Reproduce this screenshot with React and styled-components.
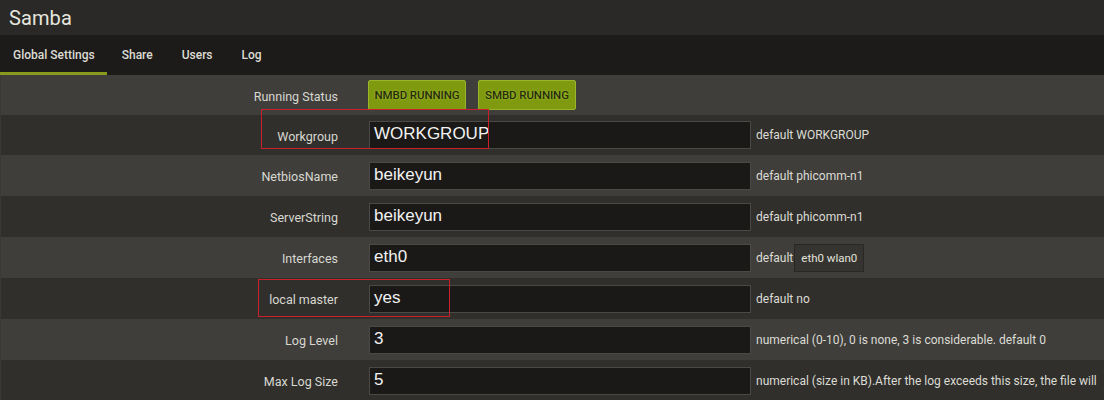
import React from "react";
import styled, { createGlobalStyle } from "styled-components";

const Global = createGlobalStyle`
  html, body { margin: 0; padding: 0; background: #31302d; }
  body { font-family: Roboto, "Noto Sans", sans-serif; overflow: hidden; }
`;

const Page = styled.div`
  width: 1104px;
  height: 400px;
  overflow: hidden;
  background: #31302d;
`;

const Header = styled.div`
  height: 35px;
  background: #2a2927;
  display: flex;
  align-items: center;
  padding-left: 9px;
  color: #e6e6de;
  font-size: 20px;
  letter-spacing: 0.1px;
`;

const Tabs = styled.div`
  height: 40px;
  background: #1c1b19;
  display: flex;
  align-items: stretch;
`;

const Tab = styled.div`
  display: flex;
  align-items: center;
  padding: 2px ${(p) => (p.$first ? "12px" : "14px")} 0 ${(p) => (p.$first ? "13px" : "15px")};
  font-size: 12px;
  font-weight: 500;
  color: #dcdcd4;
  border-bottom: 3px solid ${(p) => (p.$active ? "#8a9a1c" : "transparent")};
`;

const Rows = styled.div`
  display: flex;
  flex-direction: column;
  border-left: 1px solid #3a3936;
`;

const Row = styled.div`
  position: relative;
  height: ${(p) => p.$h || 41}px;
  background: ${(p) => (p.$light ? "#3f3e3b" : "#302f2c")};
  display: grid;
  grid-template-columns: 337px 382px auto;
  column-gap: 31px;
  align-items: center;
  white-space: nowrap;
`;

const Label = styled.div`
  text-align: right;
  font-size: 12.5px;
  color: #d8d8d0;
  padding-top: 2px;
`;

const FieldWrap = styled.div`
  display: flex;
  align-items: center;
  gap: 5px;
  grid-column: 2 / 4;
`;

const Input = styled.div`
  width: 382px;
  height: 28px;
  box-sizing: border-box;
  background: #1a1917;
  border: 1px solid #4a4946;
  display: flex;
  align-items: center;
  padding: 0 0 2px 4px;
  font-family: "Liberation Sans", Arial, sans-serif;
  font-size: 17px;
  color: #f2f2f2;
  flex-shrink: 0;
`;

const Desc = styled.div`
  font-size: 12px;
  color: #dcdcd4;
  display: flex;
  align-items: center;
  gap: 1px;
`;

const Chip = styled.span`
  display: inline-flex;
  align-items: center;
  height: 28px;
  padding: 0 6px;
  box-sizing: border-box;
  background: #353431;
  border: 1px solid #292826;
  color: #e2e2da;
  font-size: 11.5px;
`;

const Buttons = styled.div`
  display: flex;
  gap: 12px;
  grid-column: 2 / 4;
  margin-left: -1px;
`;

const StatusButton = styled.div`
  height: 30px;
  width: 98px;
  box-sizing: border-box;
  background: #7f9a0f;
  border: 1px solid #9ab52a;
  border-radius: 2px;
  display: flex;
  align-items: center;
  justify-content: center;
  font-size: 11.5px;
  font-weight: 500;
  color: #262b0c;
  letter-spacing: -0.1px;
  text-shadow: 0 0 2px rgba(200, 230, 90, 0.6);
`;

const Highlight = styled.div`
  position: absolute;
  left: ${(p) => p.$x}px;
  top: ${(p) => p.$y}px;
  width: ${(p) => p.$w}px;
  height: ${(p) => p.$hh}px;
  border: 1px solid #c8212b;
  box-sizing: border-box;
  pointer-events: none;
`;

const fields = [
  { label: "Workgroup", value: "WORKGROUP", desc: "default WORKGROUP", light: false, h: 40, box: { x: 260, y: -6, w: 228, h: 40 } },
  { label: "NetbiosName", value: "beikeyun", desc: "default phicomm-n1", light: true, h: 41 },
  { label: "ServerString", value: "beikeyun", desc: "default phicomm-n1", light: false, h: 41 },
  { label: "Interfaces", value: "eth0", desc: "default", chip: "eth0 wlan0", light: true, h: 41 },
  { label: "local master", value: "yes", desc: "default no", light: false, h: 41, box: { x: 257, y: 1, w: 192, h: 38 } },
  { label: "Log Level", value: "3", desc: "numerical (0-10), 0 is none, 3 is considerable. default 0", light: true, h: 41 },
  { label: "Max Log Size", value: "5", desc: "numerical (size in KB).After the log exceeds this size, the file will", light: false, h: 41 },
];

export default function App() {
  return (
    <Page>
      <Global />
      <Header>Samba</Header>
      <Tabs>
        <Tab $active $first>Global Settings</Tab>
        <Tab>Share</Tab>
        <Tab>Users</Tab>
        <Tab>Log</Tab>
      </Tabs>
      <Rows>
        <Row $light $h={40}>
          <Label>Running Status</Label>
          <Buttons>
            <StatusButton>NMBD RUNNING</StatusButton>
            <StatusButton>SMBD RUNNING</StatusButton>
          </Buttons>
        </Row>
        {fields.map((f) => (
          <Row key={f.label} $light={f.light} $h={f.h}>
            <Label>{f.label}</Label>
            <FieldWrap>
              <Input>{f.value}</Input>
              <Desc>
                {f.desc}
                {f.chip && <Chip>{f.chip}</Chip>}
              </Desc>
            </FieldWrap>
            {f.box && <Highlight $x={f.box.x} $y={f.box.y} $w={f.box.w} $hh={f.box.h} />}
          </Row>
        ))}
      </Rows>
    </Page>
  );
}
